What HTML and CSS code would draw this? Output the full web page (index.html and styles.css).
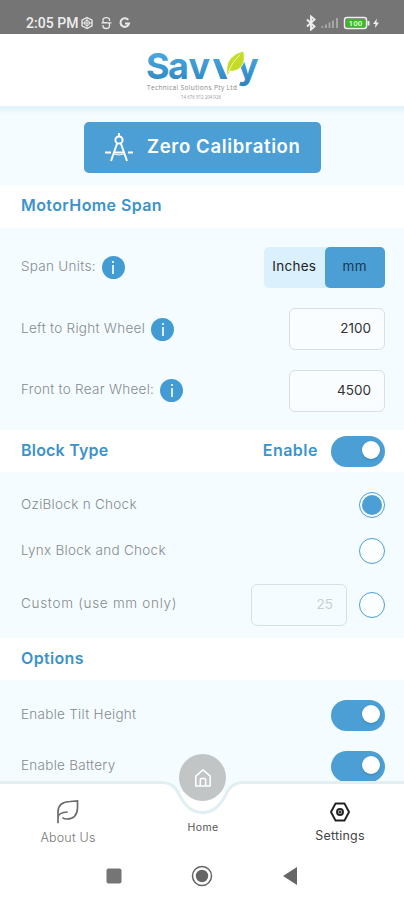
FILE: index.html
```html
<!DOCTYPE html>
<html lang="en">
<head>
<meta charset="utf-8">
<title>Savvy Settings</title>
<link rel="stylesheet" href="styles.css">
</head>
<body>
<div class="status">
  <span class="time">2:05 PM</span>
  <svg class="status-left" width="54" height="14" viewBox="0 0 54 14" fill="none" stroke="#e8e8e8">
    <path d="M6 1.5 11 4.2V9.8L6 12.5 1 9.8V4.2Z" stroke-width="1.4"/><circle cx="6" cy="7" r="2.6"/><path d="M6 1v12M1 7h10"/>
    <path d="M28.500 5V3.500Q28.500 1.600 25.200 1.600T22 4V5.500Q22 6.700 25.200 6.700T28.500 8.500V10Q28.500 12.500 25.200 12.500T22 10V9M20.500 6.800h10" stroke-width="1.300"/>
    <path d="M47.200 3.900A4.300 4.300 0 1 0 48 7.500H44" stroke-width="2.100"/>
  </svg>
  <svg class="status-right" width="74" height="16" viewBox="0 0 74 16" fill="none" stroke="#eee">
    <path d="M1 4.500 8.500 11.500 5 14.500V1.500L8.500 4.500 1 11.500" stroke-width="1.900"/>
    <path d="M16.500 13v-2M20 13V9.500M23.500 13V7.500M27 13V5.500M31 13V3" stroke="#a6a6a6" stroke-width="2"/>
    <rect x="38.500" y="2.500" width="22" height="11" rx="2.500" stroke-width="1.500"/><path d="M62.500 6v4.500" stroke-width="2"/>
    <rect x="40" y="4" width="19" height="8" rx="1" fill="#3fb52b" stroke="none"/>
    <text x="49.500" y="11" class="battery-text">100</text>
    <path d="M71 3.500 67 9h2.500L69 13l4-5.500h-2.700Z" fill="#eee" stroke="none"/>
  </svg>
</div>
<header class="header">
  <svg width="116" height="56" viewBox="144 48 116 56">
    <defs>
      <linearGradient id="blue" x1="0" y1="52" x2="0" y2="89" gradientUnits="userSpaceOnUse"><stop offset="0" stop-color="#4aa9df"/><stop offset="1" stop-color="#2b80bc"/></linearGradient>
    </defs>
    <text class="logo-text" y="79" x="146 168 188.500" fill="url(#blue)">Sav</text>
    <path d="M213 59h6L227.500 79H220.500Z" fill="url(#blue)"/>
    <text class="logo-text" y="79" x="237" fill="url(#blue)">y</text>
    <path d="M243.500 51Q246 60 241.500 66.500 236.500 72 230 71L227.500 76.500Q225 66 230 59 235 53 243.500 51Z" fill="#c5dc27" stroke="#fff" stroke-width=".8"/>
    <path d="M228.500 72Q232 62 240 55" fill="none" stroke="#f2f8b7" stroke-width=".9"/>
    <text class="logo-sub" x="147" y="90" textLength="90">Technical Solutions Pty Ltd</text>
    <text class="logo-abn" x="181" y="99" textLength="40">14 676 512 204 926</text>
  </svg>
</header>
<main class="content">
  <div class="hero">
    <button class="calibrate">
      <svg width="30" height="32" viewBox="0 0 30 32" fill="none" stroke="#fff" stroke-width="2">
        <circle cx="15" cy="8" r="3.600"/><path d="M15 1v3M13.300 11 7 29M16.700 11 23 29M1 20.500h6M11 20.500h8M24 20.500h5"/><path d="M10 22q5 2 10 0" stroke-width="1"/>
      </svg>
      <span>Zero Calibration</span>
    </button>
  </div>
  <h2 class="band band-span"><span class="t-motor">MotorHome Span</span></h2>
  <section class="span-rows">
    <div class="row"><span class="label">Span Units:</span><i class="info"></i><div class="units"><span class="inches">Inches</span><span class="mm">mm</span></div></div>
    <div class="row"><span class="label">Left to Right Wheel</span><i class="info"></i><div class="field">2100</div></div>
    <div class="row"><span class="label">Front to Rear Wheel:</span><i class="info"></i><div class="field">4500</div></div>
  </section>
  <h2 class="band band-block"><span class="t-block">Block Type</span><span class="enable">Enable</span><i class="toggle"></i></h2>
  <section class="block-rows">
    <div class="row r-ozi"><span class="label">OziBlock n Chock</span><i class="radio on"></i></div>
    <div class="row r-lynx"><span class="label">Lynx Block and Chock</span><i class="radio"></i></div>
    <div class="row r-custom"><span class="label wide">Custom (use mm only)</span><div class="field muted">25</div><i class="radio"></i></div>
  </section>
  <h2 class="band band-options"><span class="t-options">Options</span></h2>
  <section class="option-rows">
    <div class="row"><span class="label">Enable Tilt Height</span><i class="toggle"></i></div>
    <div class="row"><span class="label">Enable Battery</span><i class="toggle"></i></div>
  </section>
</main>
<nav class="tabs">
  <svg class="tabs-shape" width="404" height="76" viewBox="0 0 404 76">
    <path d="M0 7H161C172 7 176 12 180 20 185 30 192 37 202.500 37S220 30 225 20C229 12 233 7 244 7H404V76H0Z" fill="#fff"/>
    <path d="M0 6.500H161C172 6.500 176 12 180 20 185 30 192 36.500 202.500 36.500S220 30 225 20C229 12 233 6.500 244 6.500H404" fill="none" stroke="#e1eff3" stroke-width="3"/>
  </svg>
  <div class="home-circle">
    <svg width="18" height="20" viewBox="0 0 20 22" fill="none" stroke="#fff" stroke-width="1.700" stroke-linejoin="round"><path d="M2 9 10 2l8 7v11H2ZM7 20v-7q0-1.500 1.500-1.500h3Q13 11.500 13 13v7"/></svg>
  </div>
  <div class="tab about">
    <svg width="24" height="26" viewBox="0 0 24 26" fill="none" stroke="#6c6c6c" stroke-width="1.700" stroke-linecap="round"><path d="M2 23.500V13Q2 3 14 2.500L21.500 2v7Q21 20 11 20 8 20 7 19M2 18Q3 13.500 11 13"/></svg>
    <span>About Us</span>
  </div>
  <div class="tab home"><span>Home</span></div>
  <div class="tab settings">
    <svg width="20" height="20" viewBox="0 0 20 20" fill="none" stroke="#222" stroke-width="1.900" stroke-linejoin="round"><path d="M5.500 1.500h9L19 10l-4.500 8.500h-9L1 10Z"/><circle cx="10" cy="10" r="3"/><circle cx="10" cy="10" r=".6"/></svg>
    <span>Settings</span>
  </div>
</nav>
<footer class="system">
  <svg width="16" height="16"><rect x=".5" y=".5" width="15" height="15" rx="2" fill="#757575"/></svg>
  <svg width="22" height="22"><circle cx="11" cy="11" r="9.500" fill="none" stroke="#666" stroke-width="1.500"/><circle cx="11" cy="11" r="6.200" fill="#666"/></svg>
  <svg width="14" height="18"><path d="M14 0v18L0 9Z" fill="#666"/></svg>
</footer>
</body>
</html>
```
FILE: styles.css
```css
* { box-sizing: border-box; }
body { margin: 0; width: 404px; height: 900px; overflow: hidden; display: flex; flex-direction: column; background: #fff; font-family: Inter, "Open Sans", sans-serif; }
h2 { margin: 0; }
svg { display: block; flex: none; }
i { display: block; flex: none; }

.status { height: 34px; flex: none; background: #757575; display: flex; align-items: center; padding: 11px 24px 0 26px; }
.time { font: 500 14px/20px Roboto, sans-serif; color: #eee; width: 55px; white-space: nowrap; letter-spacing: .05px; }
.status-right { margin-left: auto; }
.battery-text { font: 700 8px Roboto, sans-serif; fill: #d7f5cf; stroke: none; text-anchor: middle; }

.header { height: 73px; flex: none; display: flex; justify-content: center; padding-top: 14px; border-bottom: 1px solid #e4f4fb; }
.header svg { overflow: visible; }
.logo-text { font: 700 36px Inter, sans-serif; }
.logo-sub { font: 400 6.500px "Open Sans", sans-serif; fill: #888; }
.logo-abn { font: 400 4.500px "Open Sans", sans-serif; fill: #999; }

.content { height: 685px; flex: none; overflow: hidden; background: #f5fcff; }
.hero { height: 78px; padding: 15px 0 0 84px; background: linear-gradient(#dff1fa, #f5fcff 7px); }
.calibrate { width: 237px; height: 51px; border: 0; border-radius: 5px; background: #4b9fd5; color: #fff; display: flex; align-items: center; padding: 0 0 3px 20px; gap: 13px; font: 600 18.500px Inter, sans-serif; white-space: nowrap; }
.calibrate svg { margin-top: 3px; }
.calibrate span { letter-spacing: .65px; }

.band { background: #fff; display: flex; align-items: center; padding: 0 19px 0 21px; color: #3c93ca; font-size: 16px; font-weight: 600; white-space: nowrap; }
.band-span { height: 43px; padding-bottom: 4px; }
.band-block { height: 42px; }
.band-options { height: 42px; padding-bottom: 3px; }
.t-block, .enable { margin-top: -3px; }
.enable { margin-left: auto; margin-right: 13px; letter-spacing: .5px; }

.row { display: flex; align-items: center; padding: 0 19px 0 21px; }
.label { font-size: 13.500px; font-weight: 300; color: #858b8d; white-space: nowrap; margin-top: -3px; letter-spacing: .28px; }
.wide { letter-spacing: .7px; }
.row > :last-child { margin-left: auto; }
.span-rows { height: 202px; padding-top: 9px; }
.span-rows .row { height: 61.500px; }
.info { width: 23px; height: 23px; border-radius: 50%; background: #429bd3; margin-left: 6px; display: grid; justify-items: center; align-content: center; gap: 2px; }
.info::before { content: ""; width: 2px; height: 2px; background: #d8effb; }
.info::after { content: ""; width: 2px; height: 9px; background: #d8effb; }
.units { width: 121px; height: 41px; display: flex; background: #daf1fd; border-radius: 5px; font-size: 13.500px; color: #222; letter-spacing: .3px; }
.units span { width: 60.500px; line-height: 39px; text-align: center; }
.units .mm { background: #4b9fd5; border-radius: 5px; color: #163a52; }
.field { width: 96px; height: 42px; border: 1px solid #dadfe1; border-radius: 6px; background: #f9fdff; text-align: right; padding-right: 13px; font-size: 13.500px; line-height: 38px; color: #333; }
.muted { color: #c9cfd1; background: #f5fcff; }
.toggle { width: 54px; height: 31px; border-radius: 16px; background: #4b9fd5; padding: 5px 5px 0 0; }
.toggle::after { content: ""; display: block; width: 18px; height: 18px; border-radius: 50%; background: #fff; margin-left: auto; box-shadow: 0 1px 2px #266b9780; }
.radio { width: 26px; height: 26px; border: 1.500px solid #4b9fd5; border-radius: 50%; background: #fafeff; }
.radio.on { background: #4b9fd5; background-clip: content-box; padding: 2px; }

.block-rows { height: 166px; padding-top: 10px; }
.r-ozi, .r-lynx { height: 46px; }
.r-custom { height: 61px; }
.row.r-custom .muted { margin-left: auto; }
.row.r-custom .radio { margin-left: 12px; }
.option-rows { padding-top: 10px; }
.option-rows .row { height: 51px; }

.t-motor { letter-spacing: .4px; }
.t-block { letter-spacing: .2px; }
.t-options { letter-spacing: .35px; }

.tabs { position: relative; height: 76px; flex: none; margin-top: -16px; }
.tabs-shape { position: absolute; left: 0; top: 0; }
.home-circle { position: absolute; left: 179px; top: -22px; width: 47px; height: 47px; border-radius: 50%; background: #c2c5c6; display: grid; place-items: center; }
.tab { position: absolute; width: 100px; display: flex; flex-direction: column; align-items: center; font-size: 12.500px; color: #777; }
.about { left: 18px; top: 23px; gap: 5px; font-weight: 300; letter-spacing: .2px; }
.home { left: 153px; top: 45px; font-size: 10.500px; color: #555; letter-spacing: .4px; }
.settings { left: 290px; top: 26px; gap: 6px; color: #444; letter-spacing: .2px; }

.system { height: 48px; display: flex; align-items: center; padding: 0 0 0 106px; }
.system svg:nth-child(2) { margin-left: 69px; }
.system svg:nth-child(3) { margin-left: 70px; }
```
